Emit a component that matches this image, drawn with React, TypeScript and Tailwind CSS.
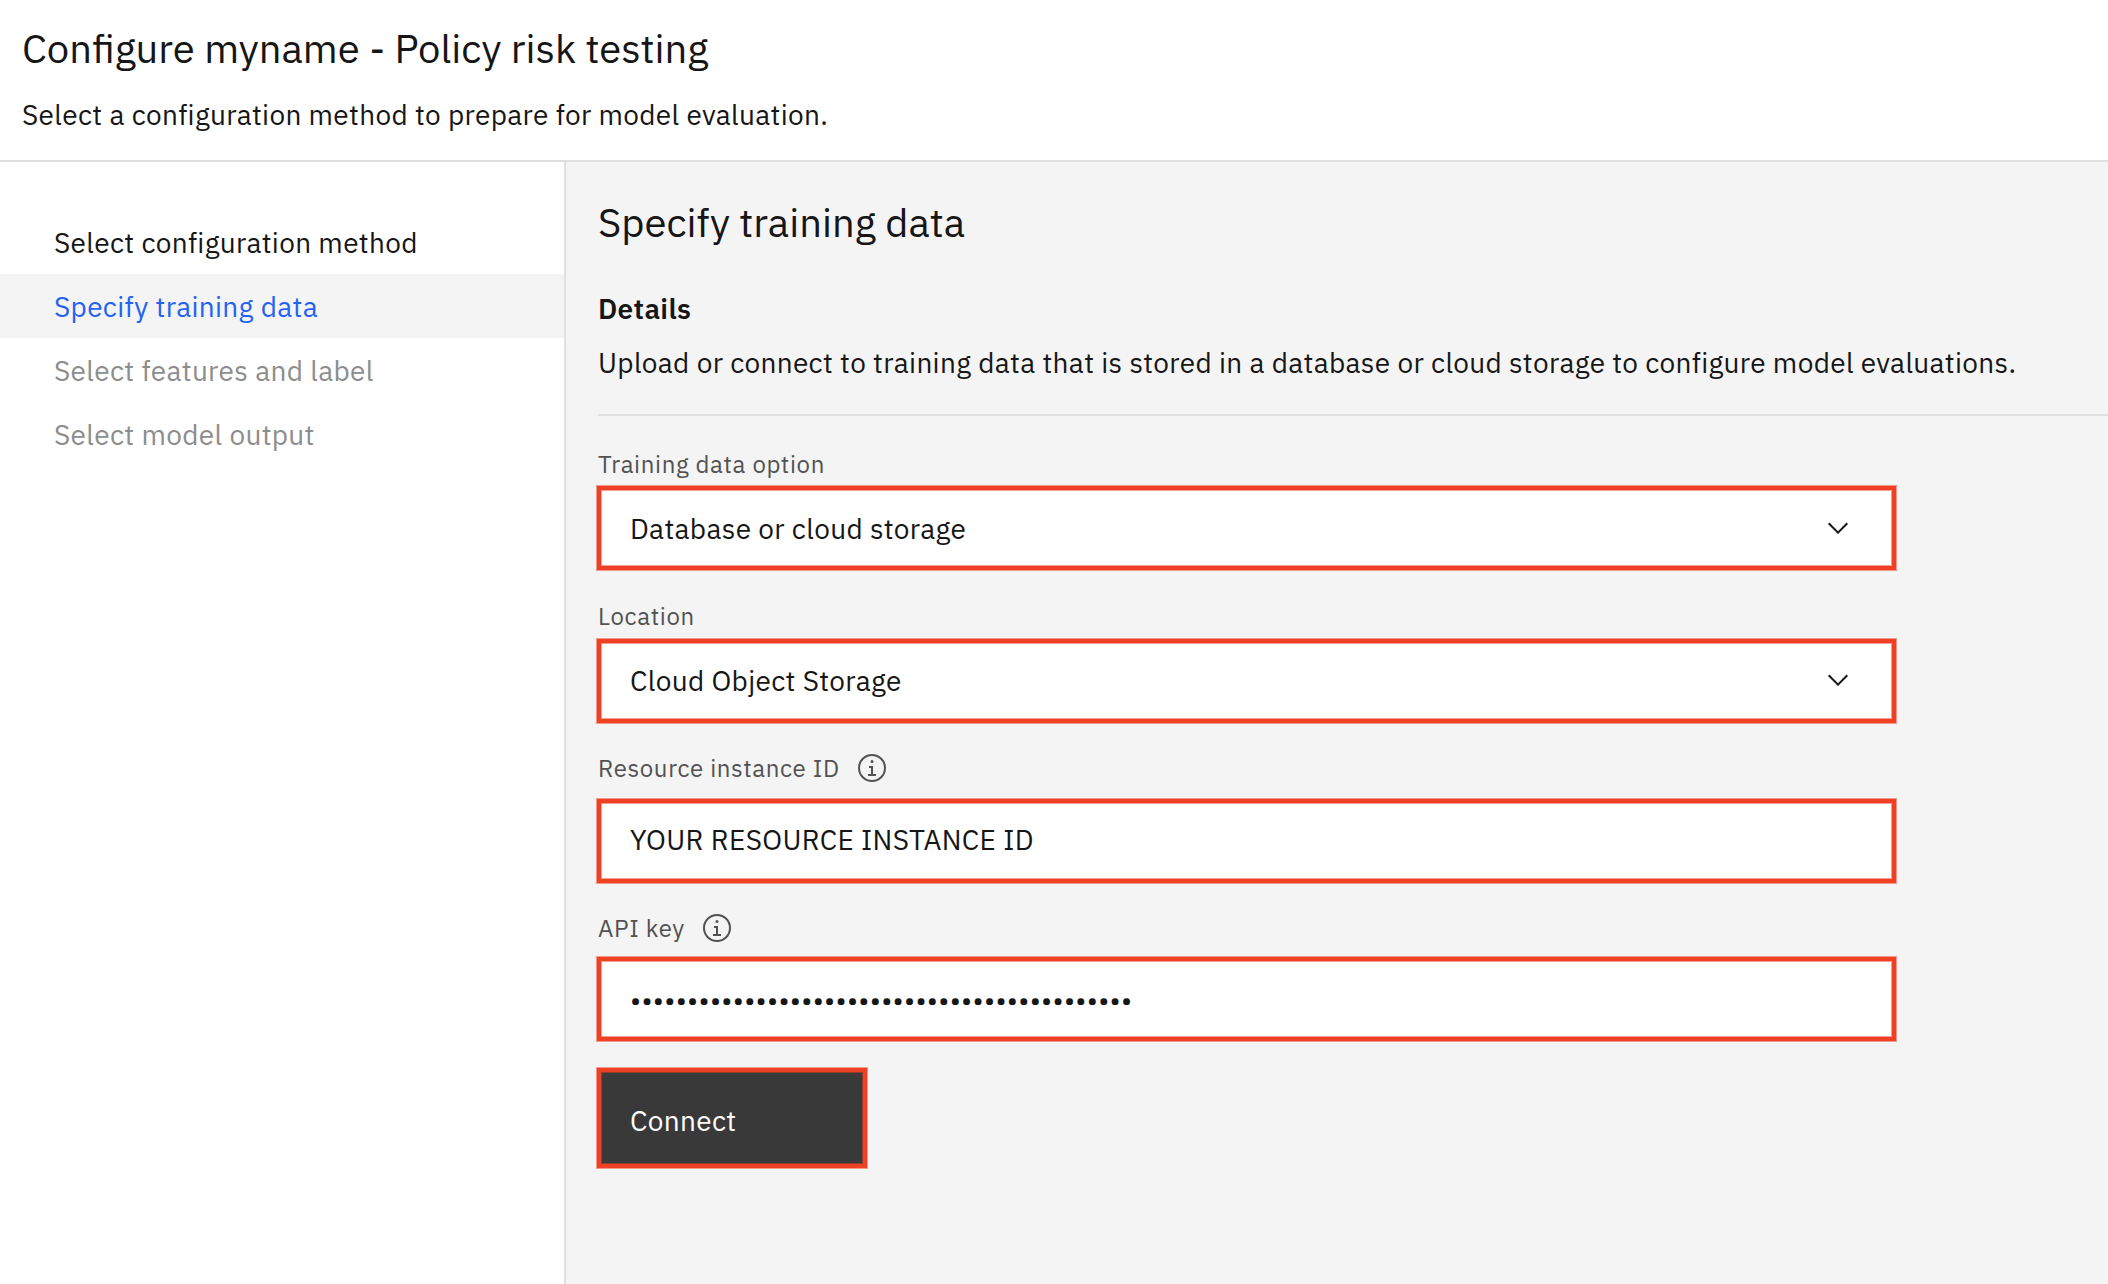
import React from "react";

const steps = [
  { label: "Select configuration method", tone: "text-[#161616]" },
  { label: "Specify training data", tone: "bg-[#f4f4f4] text-[#2463f2]" },
  { label: "Select features and label", tone: "text-[#8d8d8d]" },
  { label: "Select model output", tone: "text-[#8d8d8d]" },
];

const outline =
  "border-4 border-[#ee4024] shadow-[0_0_0_1px_rgba(238,64,36,0.5),inset_0_0_0_1px_rgba(238,64,36,0.5)]";

function InfoIcon() {
  return (
    <svg className="size-8 shrink-0" viewBox="0 0 32 32" fill="currentColor" aria-hidden="true">
      <path d="M17 22V14H13v2h2v6H12v2h8V22zM16 8a1.5 1.5 0 1 0 1.5 1.5A1.5 1.5 0 0 0 16 8z" />
      <path d="M16 30A14 14 0 1 1 30 16 14 14 0 0 1 16 30ZM16 4A12 12 0 1 0 28 16 12 12 0 0 0 16 4Z" />
    </svg>
  );
}

function ChevronDown() {
  return (
    <svg className="size-8 shrink-0 text-[#161616]" viewBox="0 0 16 16" fill="currentColor" aria-hidden="true">
      <path d="M8 11L3 6 3.7 5.3 8 9.6 12.3 5.3 13 6z" />
    </svg>
  );
}

function Label({ text, info = false, className }: { text: string; info?: boolean; className: string }) {
  return (
    <div className={`flex h-8 items-center text-2xl leading-8 tracking-[0.64px] text-[#525252] ${className}`}>
      <span>{text}</span>
      {info && (
        <span className="ml-4">
          <InfoIcon />
        </span>
      )}
    </div>
  );
}

function Field({ value, chevron = false, className }: { value: string; chevron?: boolean; className: string }) {
  return (
    <div
      className={`-ml-px flex h-[84px] w-[1299px] items-center justify-between bg-white pr-[38px] pl-[29px] ${outline} ${className}`}
    >
      <span className={chevron ? "pt-0.5" : ""}>{value}</span>
      {chevron && <ChevronDown />}
    </div>
  );
}

export default function App() {
  return (
    <div className="flex h-[1284px] w-[2108px] flex-col overflow-hidden bg-white font-['IBM_Plex_Sans',Roboto,sans-serif] text-[28px] leading-9 tracking-[0.33px] text-[#161616]">
      <header className="h-[162px] shrink-0 border-b-2 border-[#e0e0e0] pt-[22px] pl-[22px]">
        <h1 className="text-[40px] leading-[52px] tracking-normal">Configure myname - Policy risk testing</h1>
        <p className="mt-[23px]">Select a configuration method to prepare for model evaluation.</p>
      </header>

      <div className="flex min-h-0 flex-1">
        <nav className="w-[566px] shrink-0 border-r-2 border-[#e0e0e0] pt-12">
          {steps.map((s) => (
            <div key={s.label} className={`flex h-16 items-center pt-0.5 pl-[54px] ${s.tone}`}>
              {s.label}
            </div>
          ))}
        </nav>

        <main className="flex-1 bg-[#f4f4f4] pt-[34px] pl-8">
          <h2 className="text-[40px] leading-[52px] tracking-normal">Specify training data</h2>
          <h3 className="mt-[43px] font-semibold">Details</h3>
          <p className="mt-[18px]">
            Upload or connect to training data that is stored in a database or cloud storage to configure model
            evaluations.
          </p>
          <div className="mt-[33px] h-0.5 bg-[#e0e0e0]" />

          <Label text="Training data option" className="mt-8" />
          <Field value="Database or cloud storage" chevron className="mt-1.5" />

          <Label text="Location" className="mt-[30px]" />
          <Field value="Cloud Object Storage" chevron className="mt-[7px] pb-0.5" />

          <Label text="Resource instance ID" info className="mt-[29px]" />
          <Field value="YOUR RESOURCE INSTANCE ID" className="mt-[15px] pb-0.5" />

          <Label text="API key" info className="mt-[29px]" />
          <Field value={"•".repeat(44)} className="mt-[13px] pt-0.5" />

          <button
            className={`mt-[27px] -ml-px flex h-[100px] w-[270px] items-center bg-[#393939] pt-1.5 pl-[29px] text-white ${outline}`}
          >
            Connect
          </button>
        </main>
      </div>
    </div>
  );
}
